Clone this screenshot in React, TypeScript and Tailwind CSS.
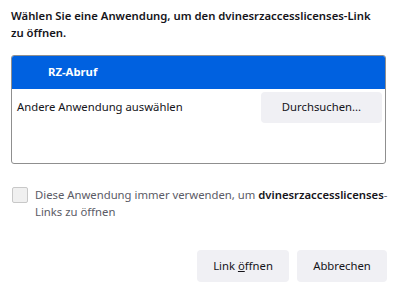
import React from "react";

export default function App() {
  return (
    <div className="w-[397px] h-[293px] bg-white text-[#15141a] flex flex-col" style={{ fontFamily: '"Noto Sans", "Open Sans", sans-serif' }}>
      <div className="shrink-0 px-[11px] pt-[7px] text-[11.3px] leading-[17px] font-semibold">
        Wählen Sie eine Anwendung, um den dvinesrzaccesslicenses-Link<br />zu öffnen.
      </div>
      <div className="shrink-0 mx-[11px] mt-[14px] w-[375px] h-[109px] border border-[#8f8f8f] rounded-[3px] overflow-hidden flex flex-col">
        <div className="h-[33px] bg-[#0061e0] text-white font-bold text-[11.3px] flex items-center pl-[36px]">RZ-Abruf</div>
        <div className="flex items-center justify-between pl-[5px] pr-[3px] pt-[3px]">
          <span className="text-[11.3px]">Andere Anwendung auswählen</span>
          <button className="w-[121px] h-[31px] bg-[#f0f0f4] rounded-[4px] text-[11.3px]">Durchsuchen...</button>
        </div>
      </div>
      <div className="shrink-0 flex items-start ml-[12px] mt-[22px] gap-[7px]">
        <div className="w-[16px] h-[16px] mt-[1px] border border-[#c8c8c8] bg-[#f0f0f0] rounded-[2px] shrink-0" />
        <div className="text-[11.3px] leading-[17px] text-[#5b5b66] whitespace-nowrap">
          Diese Anwendung immer verwenden, um <span className="font-semibold text-[#15141a]">dvinesrzaccesslicenses</span>-<br />Links zu öffnen
        </div>
      </div>
      <div className="shrink-0 flex justify-end gap-[8px] mr-[10px] mt-[30px]">
        <button className="w-[92px] h-[32px] bg-[#f0f0f4] rounded-[4px] text-[11.3px]">Link <span className="underline">ö</span>ffnen</button>
        <button className="w-[90px] h-[32px] bg-[#f0f0f4] rounded-[4px] text-[11.3px]">Abbrechen</button>
      </div>
    </div>
  );
}
